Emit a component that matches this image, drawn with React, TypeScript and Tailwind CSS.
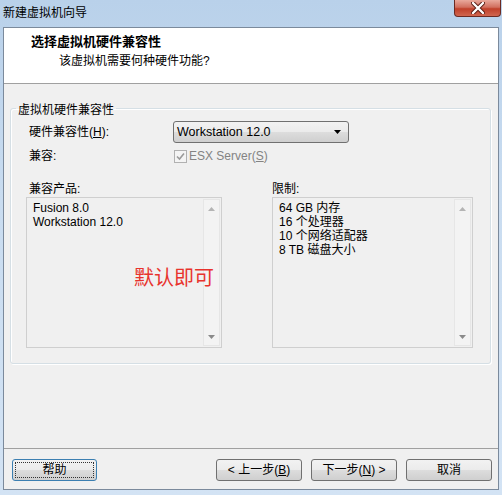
const font = "font-['Liberation_Sans','Noto_Sans_CJK_SC',sans-serif]";

const products = ["Fusion 8.0", "Workstation 12.0"];
const limits = ["64 GB 内存", "16 个处理器", "10 个网络适配器", "8 TB 磁盘大小"];

function ScrollArrow({ up }: { up?: boolean }) {
  return (
    <div className="h-[17px] flex items-center justify-center">
      <svg width="7" height="4" viewBox="0 0 7 4">
        <path d={up ? "M0 4 L3.5 0 L7 4 Z" : "M0 0 L3.5 4 L7 0 Z"} fill={up ? "#b4b4b4" : "#8a8a8a"} />
      </svg>
    </div>
  );
}

// read-only list with a disabled vertical scrollbar
function ListBox({ items, width, children }: { items: string[]; width: string; children?: React.ReactNode }) {
  return (
    <div className={`relative h-[151px] ${width} border border-[#cfcfcf] bg-[#f0f0f0] flex`}>
      <div className="flex-1 pl-[6px] pt-[3px] text-[12px] leading-[14px] text-black">
        {items.map((it) => (
          <div key={it}>{it}</div>
        ))}
      </div>
      <div className="w-[17px] mr-[1px] my-[1px] border border-[#e6e6e6] bg-[#f3f3f3] flex flex-col justify-between">
        <ScrollArrow up />
        <ScrollArrow />
      </div>
      {children}
    </div>
  );
}

function Button({ children, focused, width }: { children: React.ReactNode; focused?: boolean; width: string }) {
  return (
    <div
      className={`${width} h-[22px] rounded-[3px] border p-[2px] ${
        focused ? "border-[#3c7fb1]" : "border-[#707070]"
      } bg-[linear-gradient(#f2f2f2_0%,#ebebeb_50%,#dddddd_51%,#cfcfcf_100%)] text-[12px] text-black`}
    >
      <div
        className={`h-full flex items-center justify-center leading-none ${
          focused ? "border border-dotted border-[#333]" : ""
        }`}
      >
        {children}
      </div>
    </div>
  );
}

export default function App() {
  return (
    <div
      className={`${font} relative w-[502px] h-[495px] overflow-hidden flex flex-col px-[3px] pb-[5px] bg-[linear-gradient(#b9d1ea,#c9dcf0_40%,#d3e3f4)]`}
    >
      {/* title bar */}
      <div className="h-[27px] flex items-center text-[12px] text-black pb-[2px]">新建虚拟机向导</div>
      <div className="absolute top-0 right-[1px] w-[47px] h-[17px] rounded-b-[4px] border border-t-0 border-[#6b2a22] bg-[linear-gradient(#e9a99c,#d16f5e_45%,#c0402a_55%,#d0664f)] flex items-center justify-center">
        <svg width="14" height="12" viewBox="0 0 14 12">
          <path d="M2 1 L12 11 M12 1 L2 11" stroke="#5a1d14" strokeWidth="4.2" strokeLinecap="round" />
          <path d="M2 1 L12 11 M12 1 L2 11" stroke="#ffffff" strokeWidth="2.4" strokeLinecap="round" />
        </svg>
      </div>

      {/* client area */}
      <div className="flex-1 flex flex-col border border-[#7b8a9c] bg-[#f0f0f0]">
        {/* wizard header */}
        <div className="h-[56px] bg-white border-b border-[#a0a0a0] pt-[6px]">
          <div className="pl-[27px] text-[13px] leading-[16px] font-bold text-black">选择虚拟机硬件兼容性</div>
          <div className="pl-[55px] mt-[3px] text-[12px] leading-[16px] text-black">该虚拟机需要何种硬件功能?</div>
        </div>

        {/* body */}
        <div className="flex-1 pt-[14px]">
          <fieldset className="ml-[6px] mr-[7px] border border-[#d5dfe5] rounded-[3px] shadow-[inset_1px_1px_0_#ffffff,1px_1px_0_#ffffff] px-[15px] pb-[15px]">
            <legend className="-ml-[10px] px-[2px] pt-[4px] text-[12px] leading-[16px] text-black">虚拟机硬件兼容性</legend>

            <div className="mt-[3px] pl-[3px] h-[22px] flex items-center text-[12px]">
              <div className="w-[144px]">
                硬件兼容性(<span className="underline">H</span>):
              </div>
              <div className="w-[176px] h-[22px] rounded-[3px] border border-[#707070] bg-[linear-gradient(#f2f2f2_0%,#ebebeb_50%,#dddddd_51%,#cfcfcf_100%)] flex items-center pl-[3px] pr-[7px]">
                <span className="flex-1 text-[12.5px]">Workstation 12.0</span>
                <svg width="7" height="4" viewBox="0 0 7 4">
                  <path d="M0 0 L3.5 4 L7 0 Z" fill="#000" />
                </svg>
              </div>
            </div>

            <div className="mt-[5px] pl-[3px] h-[16px] flex items-center text-[12px]">
              <div className="w-[145px]">兼容:</div>
              <div className="w-[13px] h-[13px] border border-[#b1b1b1] bg-[#f4f4f4] flex items-center justify-center">
                <svg width="9" height="9" viewBox="0 0 9 9">
                  <path d="M1 4.5 L3.5 7 L8 1.5" fill="none" stroke="#9a9a9a" strokeWidth="1.6" />
                </svg>
              </div>
              <span className="ml-[2px] text-[#838383]">
                ESX Server(<span className="underline">S</span>)
              </span>
            </div>

            <div className="mt-[17px] flex gap-[50px] text-[12px]">
              <div>
                <div className="pl-[3px] h-[16px] leading-[16px]">兼容产品:</div>
                <ListBox items={products} width="w-[196px]">
                  <div className="absolute left-[107px] top-[68px] text-[20px] leading-[24px] text-[#e8332d]">默认即可</div>
                </ListBox>
              </div>
              <div>
                <div className="h-[16px] leading-[16px]">限制:</div>
                <ListBox items={limits} width="w-[201px]" />
              </div>
            </div>
          </fieldset>
        </div>

        {/* footer buttons */}
        <div className="h-[41px] border-t border-[#a0a0a0] pt-[10px] pl-[8px] pr-[6px] flex">
          <Button focused width="w-[85px]">帮助</Button>
          <div className="flex-1 flex justify-end gap-[9px]">
            <Button width="w-[86px]">
              &lt; 上一步(<span className="underline">B</span>)
            </Button>
            <Button width="w-[86px]">
              下一步(<span className="underline">N</span>) &gt;
            </Button>
            <Button width="w-[86px]">取消</Button>
          </div>
        </div>
      </div>
    </div>
  );
}
